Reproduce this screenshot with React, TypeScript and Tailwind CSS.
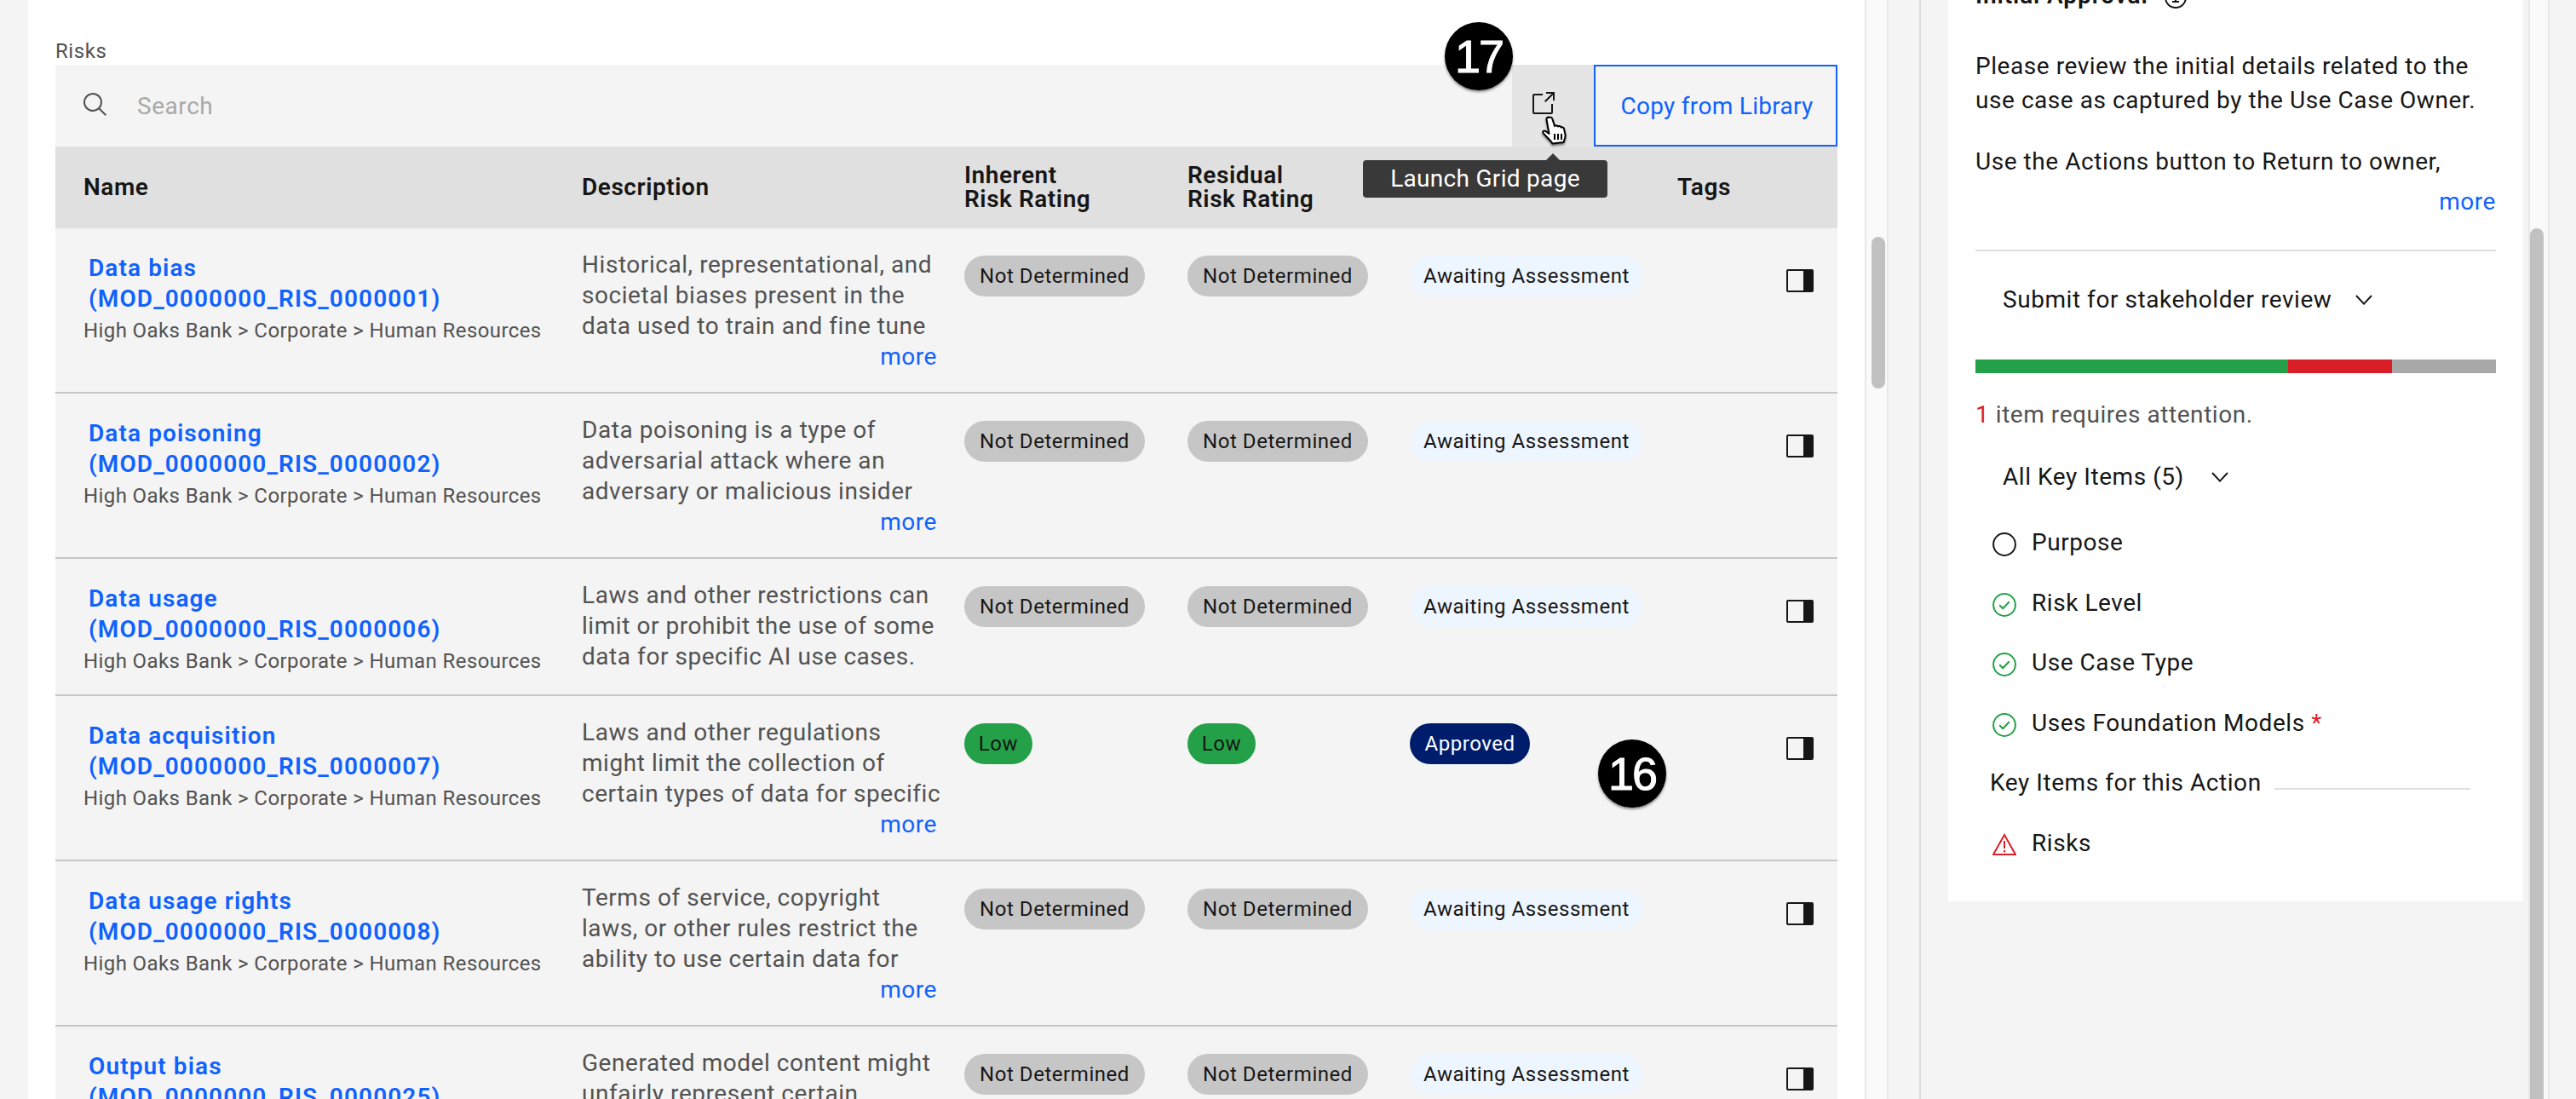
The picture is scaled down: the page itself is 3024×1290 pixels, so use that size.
const GRID = "grid grid-cols-[618px_449px_262px_262px_313px_128px_60px]";

type Row = {
  name: string;
  id: string;
  desc: string[];
  more: boolean;
  approved?: boolean;
  height: string;
};

const rows: Row[] = [
  { name: "Data bias", id: "(MOD_0000000_RIS_0000001)", desc: ["Historical, representational, and", "societal biases present in the", "data used to train and fine tune"], more: true, height: "h-[194px]" },
  { name: "Data poisoning", id: "(MOD_0000000_RIS_0000002)", desc: ["Data poisoning is a type of", "adversarial attack where an", "adversary or malicious insider"], more: true, height: "h-[194px]" },
  { name: "Data usage", id: "(MOD_0000000_RIS_0000006)", desc: ["Laws and other restrictions can", "limit or prohibit the use of some", "data for specific AI use cases."], more: false, height: "h-[161px]" },
  { name: "Data acquisition", id: "(MOD_0000000_RIS_0000007)", desc: ["Laws and other regulations", "might limit the collection of", "certain types of data for specific"], more: true, approved: true, height: "h-[194px]" },
  { name: "Data usage rights", id: "(MOD_0000000_RIS_0000008)", desc: ["Terms of service, copyright", "laws, or other rules restrict the", "ability to use certain data for"], more: true, height: "h-[194px]" },
  { name: "Output bias", id: "(MOD_0000000_RIS_0000025)", desc: ["Generated model content might", "unfairly represent certain"], more: false, height: "h-[194px]" },
];

function Pill({ kind }: { kind: "nd" | "low" | "await" | "approved" }) {
  if (kind === "nd")
    return <span className="flex h-[48px] w-[212px] items-center justify-center rounded-full bg-[#c6c6c6] text-[24px] text-[#161616]">Not Determined</span>;
  if (kind === "low")
    return <span className="flex h-[48px] w-[80px] items-center justify-center rounded-full bg-[#24a148] text-[24px] text-[#161616]">Low</span>;
  if (kind === "approved")
    return <span className="-ml-px flex h-[48px] w-[141px] items-center justify-center rounded-full bg-[#001d6c] text-[24px] text-white">Approved</span>;
  return <span className="flex h-[48px] w-[272px] items-center justify-center rounded-full bg-[#edf5ff] text-[24px] text-[#161616]">Awaiting Assessment</span>;
}

function PanelIcon() {
  return (
    <svg width="32" height="27" viewBox="0 0 32 27" className="mt-[48px]">
      <rect x="1" y="1" width="30" height="25" rx="1" fill="none" stroke="#161616" strokeWidth="2" />
      <rect x="20" y="1" width="11" height="25" fill="#161616" />
    </svg>
  );
}

function Check() {
  return (
    <svg width="28" height="28" viewBox="0 0 28 28" className="mt-[8px] shrink-0">
      <circle cx="14" cy="14" r="12.9" fill="none" stroke="#24a148" strokeWidth="2" />
      <path d="M8.2 14.2l4 4 7.6-8" fill="none" stroke="#24a148" strokeWidth="2" />
    </svg>
  );
}

function Chevron({ className }: { className: string }) {
  return (
    <svg width="20" height="12" viewBox="0 0 20 12" className={className}>
      <path d="M1 1l9 9.6L19 1" fill="none" stroke="#161616" strokeWidth="2" />
    </svg>
  );
}

function Badge({ n, className }: { n: string; className: string }) {
  return (
    <div className={`absolute flex h-[80px] w-[80px] items-center justify-center rounded-full bg-black font-['Liberation_Sans',sans-serif] text-[54px] leading-none tracking-[-2px] text-white shadow-[0_2px_3px_rgba(0,0,0,0.45)] [-webkit-text-stroke:1px_white] ${className}`}>
      {n}
    </div>
  );
}

function KeyItem({ children, icon }: { children: React.ReactNode; icon: React.ReactNode }) {
  return (
    <div className="flex h-[40px] items-start pl-[20px]">
      {icon}
      <span className="ml-[18px] text-[28px] leading-[40px] text-[#161616]">{children}</span>
    </div>
  );
}

export default function App() {
  return (
    <div className="flex h-[1290px] w-[3024px] overflow-hidden bg-[#f4f4f4] font-['Roboto',sans-serif] tracking-[0.55px]">
      <div className="w-[33px] shrink-0" />

      <main className="w-[2156px] shrink-0 bg-white pl-[32px]">
        <div className="h-[76px] pt-[44px] text-[24px] leading-[32px] text-[#525252]">Risks</div>
        <div className="relative w-[2092px]">
          <div className="flex h-[96px] bg-[#f4f4f4]">
            <div className="flex w-[1710px] items-center pl-[31px]">
              <svg width="32" height="32" viewBox="0 0 32 32" className="-mt-[2px]" fill="#525252">
                <path d="M29,27.5859l-7.5521-7.5521a11.0177,11.0177,0,1,0-1.4141,1.4141L27.5859,29ZM4,13a9,9,0,1,1,9,9A9.01,9.01,0,0,1,4,13Z" />
              </svg>
              <span className="ml-[33px] pt-[1px] text-[28px] text-[#a8a8a8]">Search</span>
            </div>
            <div className="w-[96px] bg-[#e5e5e5] pl-[20px] pt-[30px]">
              <svg width="32" height="32" viewBox="0 0 32 32" fill="#161616">
                <path d="M26,28H6a2.0027,2.0027,0,0,1-2-2V6A2.0027,2.0027,0,0,1,6,4H16V6H6V26H26V16h2V26A2.0027,2.0027,0,0,1,26,28Z" />
                <polygon points="20 2 20 4 26.586 4 18 12.586 19.414 14 28 5.414 28 12 30 12 30 2 20 2" />
              </svg>
            </div>
            <div className="flex w-[286px] items-center justify-center border-2 border-[#0f62fe] pl-[3px] pt-[1px] text-[28px] tracking-[0.3px] text-[#0f62fe]">Copy from Library</div>
          </div>

          <div className={`${GRID} h-[96px] items-center bg-[#e0e0e0] text-[28px] font-semibold leading-[28px] text-[#161616]`}>
            <div className="pl-[33px]">Name</div>
            <div>Description</div>
            <div>Inherent<br />Risk Rating</div>
            <div>Residual<br />Risk Rating</div>
            <div />
            <div>Tags</div>
            <div />
          </div>

          {rows.map((r) => (
            <div key={r.id} className={`${GRID} ${r.height} border-b-2 border-[#c6c6c6] bg-[#f4f4f4]`}>
              <div className="pl-[33px] pt-[29px]">
                <div className="ml-[6px] text-[28px] font-semibold leading-[36px] tracking-[1.1px] text-[#0f62fe]">
                  {r.name}
                  <br />
                  {r.id}
                </div>
                <div className="mt-[3px] whitespace-nowrap text-[24px] leading-[32px] tracking-[0.4px] text-[#525252]">High Oaks Bank &gt; Corporate &gt; Human Resources</div>
              </div>
              <div className="pr-[32px] pt-[25px] text-[28px] leading-[36px] text-[#525252]">
                {r.desc.map((l) => (
                  <div key={l} className="whitespace-nowrap">{l}</div>
                ))}
                {r.more && <div className="text-right text-[#0f62fe]">more</div>}
              </div>
              <div className="pt-[32px]"><Pill kind={r.approved ? "low" : "nd"} /></div>
              <div className="pt-[32px]"><Pill kind={r.approved ? "low" : "nd"} /></div>
              <div className="pt-[32px]"><Pill kind={r.approved ? "approved" : "await"} /></div>
              <div />
              <div><PanelIcon /></div>
            </div>
          ))}

          <Badge n="17" className="left-[1631px] top-[-50px]" />
          <Badge n="16" className="left-[1811px] top-[792px]" />

          <svg width="32" height="34" viewBox="0 0 32 34" className="absolute left-[1744px] top-[60px] drop-shadow-[0_2px_1px_rgba(0,0,0,0.5)]">
            <path d="M9 2c2-1 4 0 4.500 2l2.500 8c1-1 3-1 4 .5c1-1 3-.5 3.500 1c1-.5 3 0 3.500 1.500l1.500 7c.5 3-1 6-2 9l-13 1.500c-2-4-8-8.500-11-12.500c-1-2 1-3 3-2l4 3l-3-17c-.2-1 .2-2 2-2.500z" fill="#fff" stroke="#000" strokeWidth="2" strokeLinejoin="round" />
            <path d="M16 21v7M20 21v7M24 21v7" stroke="#000" strokeWidth="2" />
          </svg>

          <div className="absolute left-[1535px] top-[112px] flex h-[44px] w-[287px] items-center justify-center rounded-[4px] bg-[#393939] text-[28px] tracking-[0.3px] text-white">
            Launch Grid page
          </div>
          <svg width="18" height="9" viewBox="0 0 18 9" className="absolute left-[1749px] top-[104px]">
            <path d="M0 9L9 0l9 9z" fill="#393939" />
          </svg>
        </div>
      </main>

      <div className="h-full w-[28px] shrink-0 border-x-2 border-[#e8e8e8] bg-[#fafafa] pl-[6px] pt-[278px]">
        <div className="h-[178px] w-[16px] rounded-full bg-[#c1c1c1]" />
      </div>
      <div className="w-[36px] shrink-0" />
      <div className="flex w-[771px] shrink-0 border-l-2 border-[#dcdcdc]">
        <section className="ml-[32px] h-[1058px] w-[675px] shrink-0 overflow-hidden bg-white px-[32px]">
          <div className="-mt-[23px] flex h-[36px] items-start text-[28px] font-semibold leading-[36px] tracking-[0.9px] text-[#161616]">
            Initial Approval
            <svg width="26" height="26" viewBox="0 0 26 26" className="ml-[19px] mt-[7px]">
              <circle cx="13" cy="13" r="12" fill="none" stroke="#161616" strokeWidth="2" />
              <path d="M9 18h8M13 18v-7h-2" fill="none" stroke="#161616" strokeWidth="2" />
            </svg>
          </div>
          <p className="mt-[45px] text-[28px] leading-[40px] text-[#161616]">
            <span className="block whitespace-nowrap">Please review the initial details related to the</span>
            <span className="block whitespace-nowrap">use case as captured by the Use Case Owner.</span>
          </p>
          <p className="mt-[32px] whitespace-nowrap text-[28px] leading-[40px] text-[#161616]">Use the Actions button to Return to owner,</p>
          <div className="mt-[9px] text-right text-[28px] leading-[36px] text-[#0f62fe]">more</div>
          <div className="mt-[38px] h-[2px] bg-[#e0e0e0]" />
          <div className="mt-[37px] flex h-[40px] items-center pl-[32px] text-[28px] text-[#161616]">
            Submit for stakeholder review
            <Chevron className="ml-[28px]" />
          </div>
          <div className="mt-[50px] flex h-[16px]">
            <div className="w-3/5 bg-[#24a148]" />
            <div className="w-1/5 bg-[#da1e28]" />
            <div className="w-1/5 bg-[#a8a8a8]" />
          </div>
          <div className="mt-[29px] text-[28px] leading-[40px] text-[#525252]">
            <span className="text-[#da1e28]">1</span> item requires attention.
          </div>
          <div className="mt-[33px] flex h-[40px] items-center pl-[32px] text-[28px] text-[#161616]">
            All Key Items (5)
            <Chevron className="ml-[32px]" />
          </div>
          <div className="mt-[37px] flex flex-col gap-[30.5px]">
            <KeyItem
              icon={
                <svg width="28" height="28" viewBox="0 0 28 28" className="mt-[8px] shrink-0">
                  <circle cx="14" cy="14" r="12.9" fill="none" stroke="#161616" strokeWidth="2" />
                </svg>
              }
            >
              Purpose
            </KeyItem>
            <KeyItem icon={<Check />}>Risk Level</KeyItem>
            <KeyItem icon={<Check />}>Use Case Type</KeyItem>
            <KeyItem icon={<Check />}>
              Uses Foundation Models <span className="text-[#da1e28]">*</span>
            </KeyItem>
            <div className="flex h-[40px] items-center pl-[17px] text-[28px] text-[#161616]">
              <span className="whitespace-nowrap">Key Items for this Action</span>
              <div className="ml-[15px] mt-[14px] h-[2px] w-[230px] bg-[#e0e0e0]" />
            </div>
            <KeyItem
              icon={
                <svg width="28" height="26" viewBox="0 0 28 26" className="mt-[8px] shrink-0">
                  <path d="M14 2L27 25H1z" fill="none" stroke="#da1e28" strokeWidth="2" />
                  <path d="M14 9v9M14 20v2.600" fill="none" stroke="#da1e28" strokeWidth="2" />
                </svg>
              }
            >
              Risks
            </KeyItem>
          </div>
        </section>
        <div className="ml-[6px] h-full w-[25px] shrink-0 border-x-2 border-[#e8e8e8] bg-[#fafafa] pt-[268px]">
          <div className="h-full w-[16px] rounded-t-full bg-[#c1c1c1]" />
        </div>
      </div>
    </div>
  );
}
